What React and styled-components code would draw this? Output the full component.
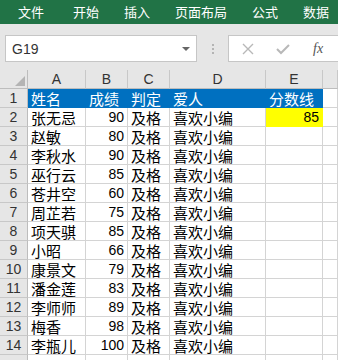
import React from 'react';
import styled, { createGlobalStyle } from 'styled-components';

const GlobalStyle = createGlobalStyle`
  html, body {
    margin: 0;
    padding: 0;
    background: #ffffff;
  }
  body {
    font-family: "Liberation Sans", "Noto Sans CJK SC", sans-serif;
    overflow: hidden;
  }
`;

const rows = [
  ['张无忌', 90],
  ['赵敏', 80],
  ['李秋水', 90],
  ['巫行云', 85],
  ['苍井空', 60],
  ['周芷若', 75],
  ['项天骐', 85],
  ['小昭', 66],
  ['康景文', 79],
  ['潘金莲', 83],
  ['李师师', 89],
  ['梅香', 98],
  ['李瓶儿', 100],
];

const tabs = ['文件', '开始', '插入', '页面布局', '公式', '数据'];
const columns = ['A', 'B', 'C', 'D', 'E', ''];

const Ribbon = styled.div`
  height: 24px;
  background: #217346;
  display: flex;
  align-items: center;
  gap: 25px;
  padding-left: 18px;
  color: #ffffff;
  font-family: "Noto Sans CJK SC", sans-serif;
  font-size: 13px;
  white-space: nowrap;
  overflow: hidden;
`;

const Tab = styled.span`
  line-height: 24px;
  &:first-child {
    margin-right: 4px;
  }
`;

const FormulaBar = styled.div`
  background: #e6e6e6;
  display: flex;
  align-items: center;
  padding: 11px 0 8px 5px;
`;

const NameBox = styled.div`
  box-sizing: border-box;
  width: 192px;
  height: 27px;
  background: #ffffff;
  border: 1px solid #c6c6c6;
  display: flex;
  align-items: center;
  justify-content: space-between;
  padding: 0 6px 0 6px;
  font-size: 14px;
  color: #333333;
`;

const Caret = styled.span`
  width: 0;
  height: 0;
  border-left: 4px solid transparent;
  border-right: 4px solid transparent;
  border-top: 4px solid #666666;
`;

const Dots = styled.div`
  width: 31px;
  display: flex;
  flex-direction: column;
  align-items: center;
  gap: 2px;
  span {
    width: 2px;
    height: 2px;
    background: #b4b4b4;
  }
`;

const FormulaBox = styled.div`
  box-sizing: border-box;
  flex: 1;
  height: 27px;
  background: #ffffff;
  border: 1px solid #c6c6c6;
  border-right: none;
  display: flex;
  align-items: center;
  padding-left: 12px;
  gap: 20px;
`;

const Fx = styled.span`
  font-family: "Liberation Serif", serif;
  font-style: italic;
  font-size: 14px;
  color: #555555;
  margin-left: 2px;
`;

const Sheet = styled.div`
  display: grid;
  grid-template-columns: 28px 58px 42px 42px 96px 57px 1fr;
  grid-auto-rows: 19px;
`;

const Corner = styled.div`
  position: relative;
  background: #e6e6e6;
  border-right: 1px solid #bdbdbd;
  border-bottom: 1px solid #bdbdbd;
  box-sizing: border-box;
  &::after {
    content: '';
    position: absolute;
    right: 2px;
    bottom: 2px;
    width: 0;
    height: 0;
    border-left: 10px solid transparent;
    border-bottom: 10px solid #b4b4b4;
  }
`;

const ColHead = styled.div`
  box-sizing: border-box;
  background: #e6e6e6;
  border-right: 1px solid #c8c8c8;
  border-bottom: 1px solid #bdbdbd;
  display: flex;
  align-items: center;
  justify-content: center;
  font-size: 14px;
  color: #333333;
`;

const RowHead = styled.div`
  box-sizing: border-box;
  background: #e6e6e6;
  border-right: 1px solid #bdbdbd;
  border-bottom: 1px solid #c8c8c8;
  display: flex;
  align-items: center;
  justify-content: center;
  font-size: 14px;
  color: #333333;
`;

const Cell = styled.div`
  box-sizing: border-box;
  border-right: 1px solid ${(p) => (p.$fill ? p.$fill : '#d4d4d4')};
  border-bottom: 1px solid ${(p) => (p.$fill ? p.$fill : '#d4d4d4')};
  background: ${(p) => p.$fill || '#ffffff'};
  color: ${(p) => (p.$light ? '#ffffff' : '#000000')};
  display: flex;
  align-items: center;
  justify-content: ${(p) => (p.$num ? 'flex-end' : 'flex-start')};
  padding: 0 3px 0 3px;
  font-family: ${(p) => (p.$num ? '"Liberation Sans", sans-serif' : '"Noto Sans CJK SC", sans-serif')};
  font-size: ${(p) => (p.$num ? '14px' : '15px')};
  line-height: 19px;
  white-space: nowrap;
  overflow: hidden;
`;

const BLUE = '#0070c0';

const App = () => {
  return (
    <>
      <GlobalStyle />
      <Ribbon>
        {tabs.map((t) => (
          <Tab key={t}>{t}</Tab>
        ))}
      </Ribbon>
      <FormulaBar>
        <NameBox>
          G19
          <Caret />
        </NameBox>
        <Dots>
          <span />
          <span />
          <span />
        </Dots>
        <FormulaBox>
          <svg width="14" height="14" viewBox="0 0 14 14">
            <path d="M2 2 L12 12 M12 2 L2 12" stroke="#b8b8b8" strokeWidth="1.4" fill="none" />
          </svg>
          <svg width="16" height="14" viewBox="0 0 16 14">
            <path d="M2 7 L6 11 L14 3" stroke="#b8b8b8" strokeWidth="2" fill="none" />
          </svg>
          <Fx>fx</Fx>
        </FormulaBox>
      </FormulaBar>
      <Sheet>
        <Corner />
        {columns.map((c, i) => (
          <ColHead key={i}>{c}</ColHead>
        ))}

        <RowHead>1</RowHead>
        <Cell $fill={BLUE} $light>姓名</Cell>
        <Cell $fill={BLUE} $light>成绩</Cell>
        <Cell $fill={BLUE} $light>判定</Cell>
        <Cell $fill={BLUE} $light>爱人</Cell>
        <Cell $fill={BLUE} $light>分数线</Cell>
        <Cell />

        {rows.map(([name, score], i) => (
          <React.Fragment key={name}>
            <RowHead>{i + 2}</RowHead>
            <Cell>{name}</Cell>
            <Cell $num>{score}</Cell>
            <Cell>及格</Cell>
            <Cell>喜欢小编</Cell>
            {i === 0 ? <Cell $fill="#ffff00" $num>85</Cell> : <Cell />}
            <Cell />
          </React.Fragment>
        ))}

        <RowHead />
        <Cell />
        <Cell />
        <Cell />
        <Cell />
        <Cell />
        <Cell />
      </Sheet>
    </>
  );
};

export default App;
